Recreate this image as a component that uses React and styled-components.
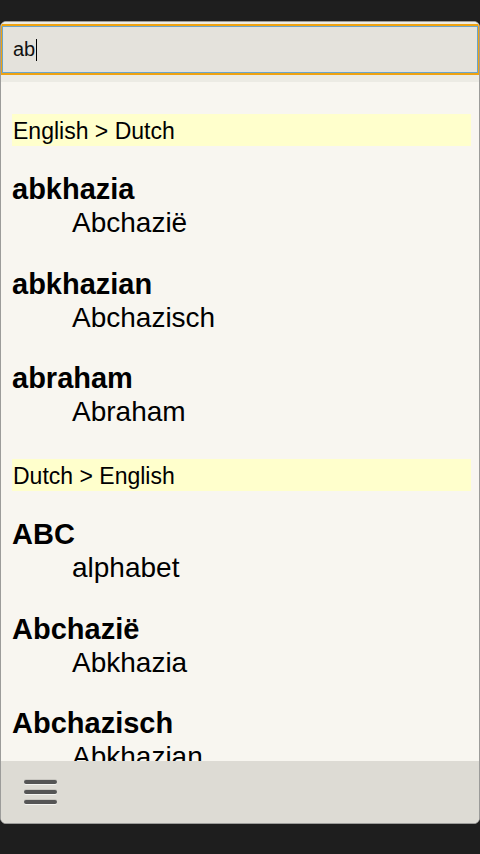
import React from 'react'
import styled, { createGlobalStyle } from 'styled-components'

const GlobalStyle = createGlobalStyle`
  html, body {
    margin: 0;
    padding: 0;
    background: #1e1e1e;
  }
  body {
    padding-top: 21px;
    font-family: "Liberation Sans", Arial, sans-serif;
  }
`

const Window = styled.div`
  width: 478px;
  height: 801px;
  display: flex;
  flex-direction: column;
  border: 1px solid #9c9c9a;
  border-radius: 6px;
  overflow: hidden;
  background: #f8f6f0;
`

const Header = styled.div`
  background: #ecebe4;
  padding: 2px 0 9px 0;
`

const SearchBox = styled.div`
  height: 45px;
  display: flex;
  align-items: center;
  padding: 0 10px;
  background: #e4e2dc;
  border: 1px solid #6aa5cc;
  box-shadow: 0 0 0 2px #eea312;
  margin: 2px 1px 0 1px;
  font-size: 20px;
  color: #111;
`

const Caret = styled.span`
  display: inline-block;
  width: 1px;
  height: 22px;
  margin-left: 1px;
  background: #000;
`

const Results = styled.div`
  flex: 1;
  overflow: hidden;
  padding: 2px 8px 0 11px;
`

const Section = styled.div`
  padding-top: 29.5px;
`

const SectionTitle = styled.div`
  height: 32px;
  line-height: 34px;
  background: #ffffcc;
  font-size: 23px;
  color: #000;
  padding-left: 1px;
`

const Entry = styled.div`
  padding-top: 28.5px;
`

const Word = styled.div`
  font-size: 29px;
  font-weight: bold;
  line-height: 31px;
  color: #000;
`

const Translation = styled.div`
  font-size: 28px;
  line-height: 35px;
  color: #000;
  padding-left: 60px;
`

const Footer = styled.div`
  height: 62px;
  background: #dddbd4;
  display: flex;
  align-items: center;
  padding-left: 23px;
`

const Menu = styled.div`
  display: flex;
  flex-direction: column;
  gap: 6px;
  width: 33px;
`

const Bar = styled.span`
  height: 4px;
  border-radius: 2px;
  background: #555;
  box-shadow: 0 1px 0 #f4f4f0, 0 -1px 0 #c8c6c0;
`

const data = [
  {
    title: 'English > Dutch',
    entries: [
      ['abkhazia', 'Abchazië'],
      ['abkhazian', 'Abchazisch'],
      ['abraham', 'Abraham'],
    ],
  },
  {
    title: 'Dutch > English',
    entries: [
      ['ABC', 'alphabet'],
      ['Abchazië', 'Abkhazia'],
      ['Abchazisch', 'Abkhazian'],
    ],
  },
]

function App() {
  return (
    <>
      <GlobalStyle />
      <Window>
        <Header>
          <SearchBox>
            ab<Caret />
          </SearchBox>
        </Header>
        <Results>
          {data.map(section => (
            <Section key={section.title}>
              <SectionTitle>{section.title}</SectionTitle>
              {section.entries.map(([word, tr]) => (
                <Entry key={word}>
                  <Word>{word}</Word>
                  <Translation>{tr}</Translation>
                </Entry>
              ))}
            </Section>
          ))}
        </Results>
        <Footer>
          <Menu>
            <Bar />
            <Bar />
            <Bar />
          </Menu>
        </Footer>
      </Window>
    </>
  )
}

export default App
